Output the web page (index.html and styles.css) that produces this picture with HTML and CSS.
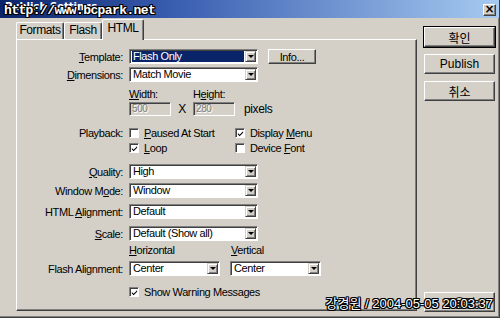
FILE: index.html
```html
<!DOCTYPE html>
<html lang="ko">
<head>
    <meta charset="UTF-8">
    <title>Publish Settings</title>
    <link rel="stylesheet" href="styles.css">
</head>
<body>
    <div class="dialog">
        <div class="titlebar">
            <span class="title">Publish Settings</span>
            <span class="close">&#215;</span>
        </div>

        <div class="main">
            <div class="sheet">
                <div class="tabs">
                    <span class="tab tab-formats">Formats</span>
                    <span class="tab tab-flash">Flash</span>
                    <span class="tab tab-html active">HTML</span>
                </div>

                <div class="panel">
                    <div class="row">
                        <label><u>T</u>emplate:</label>
                        <div class="ctl">
                            <div class="combo"><span class="combo-text selected">Flash Only</span><span class="combo-btn"></span></div>
                            <span class="btn btn-info">Info...</span>
                        </div>
                    </div>

                    <div class="row mt3">
                        <label><u>D</u>imensions:</label>
                        <div class="combo"><span class="combo-text">Match Movie</span><span class="combo-btn"></span></div>
                    </div>

                    <div class="row row-small mt6">
                        <span></span>
                        <div class="ctl">
                            <span class="size-label"><u>W</u>idth:</span>
                            <span class="size-label">H<u>e</u>ight:</span>
                        </div>
                    </div>

                    <div class="row mt1">
                        <span></span>
                        <div class="ctl">
                            <span class="field">500</span>
                            <span class="times">X</span>
                            <span class="field">280</span>
                            <span class="unit">pixels</span>
                        </div>
                    </div>

                    <div class="row mt9">
                        <label>Playback:</label>
                        <div class="ctl">
                            <span class="opt"><span class="check"></span><span><u>P</u>aused At Start</span></span>
                            <span class="opt"><span class="check"><svg viewBox="0 0 8 8"><path d="M1 3.5 L3 5.5 L7 1.5 L7 3 L3 7 L1 5 Z"/></svg></span><span>Display <u>M</u>enu</span></span>
                        </div>
                    </div>

                    <div class="row">
                        <span></span>
                        <div class="ctl">
                            <span class="opt"><span class="check"><svg viewBox="0 0 8 8"><path d="M1 3.5 L3 5.5 L7 1.5 L7 3 L3 7 L1 5 Z"/></svg></span><span><u>L</u>oop</span></span>
                            <span class="opt"><span class="check"></span><span>Device <u>F</u>ont</span></span>
                        </div>
                    </div>

                    <div class="row mt9">
                        <label><u>Q</u>uality:</label>
                        <div class="combo"><span class="combo-text">High</span><span class="combo-btn"></span></div>
                    </div>

                    <div class="row mt4">
                        <label>Window M<u>o</u>de:</label>
                        <div class="combo"><span class="combo-text">Window</span><span class="combo-btn"></span></div>
                    </div>

                    <div class="row mt6">
                        <label>HTML <u>A</u>lignment:</label>
                        <div class="combo"><span class="combo-text">Default</span><span class="combo-btn"></span></div>
                    </div>

                    <div class="row mt7">
                        <label><u>S</u>cale:</label>
                        <div class="combo"><span class="combo-text">Default (Show all)</span><span class="combo-btn"></span></div>
                    </div>

                    <div class="row row-small mt3">
                        <span></span>
                        <div class="ctl">
                            <span class="align-label"><u>H</u>orizontal</span>
                            <span class="align-label"><u>V</u>ertical</span>
                        </div>
                    </div>

                    <div class="row mt5">
                        <label>Flash Ali<u>g</u>nment:</label>
                        <div class="ctl">
                            <div class="combo combo-short"><span class="combo-text">Center</span><span class="combo-btn"></span></div>
                            <div class="combo combo-short"><span class="combo-text">Center</span><span class="combo-btn"></span></div>
                        </div>
                    </div>

                    <div class="row mt8">
                        <span></span>
                        <span class="opt"><span class="check"><svg viewBox="0 0 8 8"><path d="M1 3.5 L3 5.5 L7 1.5 L7 3 L3 7 L1 5 Z"/></svg></span><span>Show Warning Messages</span></span>
                    </div>
                </div>
            </div>

            <div class="actions">
                <span class="btn btn-side default">확인</span>
                <span class="btn btn-side">Publish</span>
                <span class="btn btn-side">취소</span>
                <span class="btn btn-side btn-help">도움말</span>
            </div>
        </div>

        <div class="stamp stamp-top">http://www.bcpark.net</div>
        <div class="stamp stamp-bottom">강경원 / 2004-05-05 20:03:37</div>
    </div>
</body>
</html>
```

FILE: styles.css
```css
:root {
    --face: #d4d0c8;
    --light: #ffffff;
    --shadow: #808080;
    --dark: #404040;
    --navy: #0a246a;
}

* {
    margin: 0;
    padding: 0;
    box-sizing: border-box;
}

body {
    width: 500px;
    height: 318px;
    overflow: hidden;
    background: var(--face);
    font-family: 'Liberation Sans', Arial, 'Noto Sans CJK KR', sans-serif;
    font-size: 11px;
    letter-spacing: -0.4px;
    color: #000;
}

u {
    text-decoration: underline;
    text-underline-offset: 1px;
}

.dialog {
    position: relative;
    width: 500px;
    height: 318px;
    background: var(--face);
    border-right: 1px solid var(--dark);
    border-bottom: 1px solid var(--dark);
    box-shadow: inset -1px -1px 0 var(--shadow);
}

/* title bar */
.titlebar {
    height: 18px;
    background: linear-gradient(to right, var(--navy) 0%, #3a5eb0 35%, #a6caf0 100%);
    display: flex;
    align-items: flex-start;
    justify-content: space-between;
    padding: 0 3px 0 5px;
}

.title {
    color: #fff;
    font-family: 'DejaVu Sans', sans-serif;
    font-weight: bold;
    font-size: 10px;
    letter-spacing: 0;
    line-height: 12px;
    margin-top: 1px;
}

.close {
    width: 13px;
    height: 12px;
    margin-top: 4px;
    background: var(--face);
    border: 1px solid;
    border-color: var(--light) var(--dark) var(--dark) var(--light);
    box-shadow: inset -1px -1px 0 var(--shadow);
    font-family: 'DejaVu Sans', sans-serif;
    font-weight: bold;
    font-size: 12px;
    line-height: 9px;
    text-align: center;
    letter-spacing: 0;
}

/* body */
.main {
    display: flex;
    gap: 7px;
    height: 298px;
    padding-left: 16px;
}

.sheet {
    width: 401px;
}

.tabs {
    display: flex;
    align-items: flex-end;
    height: 21px;
    position: relative;
    z-index: 1;
}

.tab {
    height: 17px;
    border: 1px solid;
    border-bottom: none;
    border-color: var(--light) var(--dark) transparent var(--light);
    border-radius: 2px 2px 0 0;
    box-shadow: inset -1px 0 0 var(--shadow);
    font-size: 12px;
    line-height: 15px;
    text-align: center;
}

.tab-formats { width: 48px; }
.tab-flash { width: 38px; }
.tab-html { width: 42px; }

.tab.active {
    height: 21px;
    margin-bottom: -1px;
    background: var(--face);
    line-height: 16px;
}

.panel {
    height: 272px;
    border: 1px solid;
    border-color: var(--light) var(--dark) var(--dark) var(--light);
    box-shadow: inset -1px -1px 0 var(--shadow);
    padding: 9px 0 0 1px;
}

.row {
    display: grid;
    grid-template-columns: 105px auto;
    column-gap: 6px;
    align-items: center;
    height: 15px;
}

.row-small {
    height: 12px;
}

.row label {
    text-align: right;
    white-space: nowrap;
}

.mt1 { margin-top: 1px; }
.mt3 { margin-top: 3px; }
.mt4 { margin-top: 4px; }
.mt5 { margin-top: 5px; }
.mt6 { margin-top: 6px; }
.mt7 { margin-top: 7px; }
.mt8 { margin-top: 8px; }
.mt9 { margin-top: 9px; }

.ctl {
    display: flex;
    align-items: center;
    height: 100%;
}

/* combo boxes */
.combo {
    display: flex;
    width: 129px;
    height: 15px;
    background: #fff;
    border: 1px solid;
    border-color: var(--shadow) var(--light) var(--light) var(--shadow);
    box-shadow: inset 1px 1px 0 var(--dark);
    padding: 1px 1px 1px 2px;
}

.combo-short {
    width: 91px;
    margin-right: 10px;
}

.combo-text {
    flex: 1;
    line-height: 11px;
    padding-left: 1px;
    white-space: nowrap;
    overflow: hidden;
}

.combo-text.selected {
    background: var(--navy);
    color: #fff;
    margin-right: 1px;
}

.combo-btn {
    width: 11px;
    background: var(--face);
    border: 1px solid;
    border-color: var(--face) var(--dark) var(--dark) var(--face);
    box-shadow: inset 1px 1px 0 var(--light), inset -1px -1px 0 var(--shadow);
    display: flex;
    align-items: center;
    justify-content: center;
}

.combo-btn::after {
    content: '';
    border-left: 3px solid transparent;
    border-right: 3px solid transparent;
    border-top: 3px solid #000;
}

/* buttons */
.btn {
    display: flex;
    align-items: center;
    justify-content: center;
    background: var(--face);
    border: 1px solid;
    border-color: var(--light) var(--dark) var(--dark) var(--light);
    box-shadow: inset -1px -1px 0 var(--shadow);
}

.btn-info {
    width: 48px;
    height: 15px;
    margin-left: 10px;
    font-size: 11px;
}

.actions {
    display: flex;
    flex-direction: column;
    gap: 7px;
    width: 71px;
    padding: 9px 0 4px;
}

.btn-side {
    height: 20px;
    font-size: 12px;
    letter-spacing: 0;
}

.btn-side.default {
    outline: 1px solid #000;
}

.btn-help {
    margin-top: auto;
}

/* size fields */
.size-label {
    width: 64px;
}

.field {
    width: 42px;
    height: 14px;
    border: 1px solid;
    border-color: var(--shadow) var(--light) var(--light) var(--shadow);
    box-shadow: inset 1px 1px 0 var(--dark);
    color: var(--shadow);
    text-shadow: 1px 1px 0 var(--light);
    line-height: 12px;
    padding-left: 2px;
    font-size: 10px;
}

.times {
    width: 22px;
    text-align: center;
    font-size: 12px;
}

.unit {
    margin-left: 9px;
    font-size: 12px;
}

/* checkboxes */
.opt {
    display: flex;
    align-items: center;
    width: 106px;
    white-space: nowrap;
}

.check {
    width: 10px;
    height: 10px;
    margin-right: 5px;
    background: #fff;
    border: 1px solid;
    border-color: var(--shadow) var(--light) var(--light) var(--shadow);
    box-shadow: inset 1px 1px 0 var(--dark);
    display: flex;
    align-items: center;
    justify-content: center;
    padding: 1px 0 0 1px;
}

.check svg {
    width: 7px;
    height: 7px;
    fill: #000;
}

.align-label {
    width: 102px;
}

/* overlay stamps */
.stamp {
    position: absolute;
    color: #fff;
    white-space: nowrap;
    text-shadow: 1px 0 0 #000, -1px 0 0 #000, 0 1px 0 #000, 0 -1px 0 #000,
                 1px 1px 0 #000, -1px -1px 0 #000, 1px -1px 0 #000, -1px 1px 0 #000;
}

.stamp-top {
    left: 4px;
    top: 3px;
    font-family: 'Liberation Mono', 'DejaVu Sans Mono', monospace;
    font-weight: bold;
    font-size: 13px;
    letter-spacing: -0.6px;
    line-height: 16px;
}

.stamp-bottom {
    right: 6px;
    top: 296px;
    font-family: 'Liberation Sans', 'Noto Sans CJK KR', sans-serif;
    font-size: 13px;
    letter-spacing: 0;
    line-height: 16px;
}
```
